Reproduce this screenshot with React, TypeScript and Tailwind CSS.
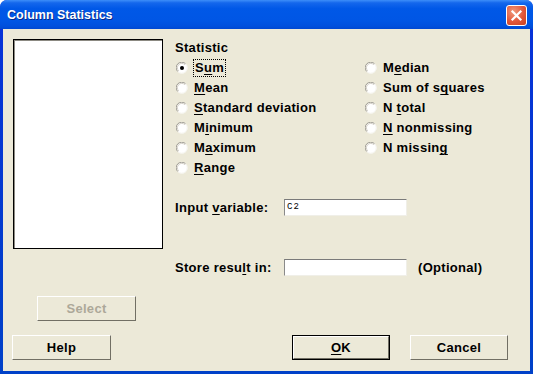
import React from "react";

const font = { fontFamily: '"Liberation Sans", Arial, sans-serif' };

function Radio({ checked }: { checked?: boolean }) {
  return (
    <svg width="12" height="12" viewBox="0 0 12 12" className="shrink-0">
      <circle cx="6" cy="6" r="5.5" fill="#ffffff" />
      <path d="M1.8 9.6 A5.3 5.3 0 0 1 9.6 1.8" fill="none" stroke="#9d9b93" strokeWidth="1" />
      <path d="M2.7 8.9 A4.2 4.2 0 0 1 8.9 2.7" fill="none" stroke="#d4d0c8" strokeWidth="1" />
      <path d="M9.6 1.8 A5.3 5.3 0 0 1 1.8 9.6" fill="none" stroke="#f4f3ee" strokeWidth="1" />
      {checked && <circle cx="6" cy="6" r="2" fill="#000" />}
    </svg>
  );
}

function Label({ text, u }: { text: string; u: number }) {
  return (
    <>
      {text.slice(0, u)}
      <span className="underline underline-offset-[2px] decoration-1">{text[u]}</span>
      {text.slice(u + 1)}
    </>
  );
}

function RadioRow({ text, u, checked }: { text: string; u: number; checked?: boolean }) {
  return (
    <div className="flex h-[20px] items-center">
      <div className="ml-[1px]">
        <Radio checked={checked} />
      </div>
      {checked ? (
        <span className="ml-[5px] px-[1px] h-[18px] leading-[16px] outline outline-1 outline-dotted outline-black -outline-offset-1 border border-transparent">
          <Label text={text} u={u} />
        </span>
      ) : (
        <span className="ml-[6px]">
          <Label text={text} u={u} />
        </span>
      )}
    </div>
  );
}

function Btn({
  children,
  w,
  def,
  disabled,
}: {
  children: React.ReactNode;
  w: string;
  def?: boolean;
  disabled?: boolean;
}) {
  return (
    <div
      className={`${w} h-[25px] ${def ? "border border-black" : ""} bg-[#ece9d8] shrink-0`}
    >
      <div className="h-full w-full border-t border-l border-white border-r border-b border-r-[#716f64] border-b-[#716f64] flex items-center justify-center">
        <span className={disabled ? "text-[#aca899]" : "text-black"}>{children}</span>
      </div>
    </div>
  );
}

function TextBox({ value }: { value?: string }) {
  return (
    <div className="w-[123px] h-[17px] bg-white border-t border-l border-t-[#7a7a7a] border-l-[#8a8a8a] border-r border-b border-r-[#f0efe8] border-b-[#f0efe8] shrink-0 flex items-center">
      <span
        className="ml-[2px] text-[9px] font-normal leading-none tracking-[1px]"
        style={{ fontFamily: '"Liberation Mono", monospace' }}
      >
        {value}
      </span>
    </div>
  );
}

export default function App() {
  return (
    <div
      className="w-[533px] h-[374px] rounded-t-[7px] overflow-hidden flex flex-col bg-[linear-gradient(to_bottom,#0831d9,#0041c8)]"
      style={font}
    >
      {/* Title bar */}
      <div className="h-[29px] shrink-0 flex items-center justify-between pl-[7px] pr-[6px] bg-[linear-gradient(to_bottom,#3d8ef9_0%,#1467ec_10%,#0058e7_30%,#0056e5_70%,#0050dd_90%,#0048d2_100%)]">
        <span className="text-white font-bold text-[12.5px] mt-[1px] [text-shadow:1px_1px_0_#0a2a8a]">
          Column Statistics
        </span>
        <div className="w-[21px] h-[21px] rounded-[3px] border border-white bg-[radial-gradient(circle_at_35%_30%,#f09a7c,#e2563a_55%,#c8401f)] flex items-center justify-center mt-[1px]">
          <svg width="13" height="13" viewBox="0 0 13 13">
            <path d="M2.5 2.5 L10.5 10.5 M10.5 2.5 L2.5 10.5" stroke="#fff" strokeWidth="2.2" strokeLinecap="square" />
          </svg>
        </div>
      </div>

      {/* Client */}
      <div className="flex-1 mx-[3px] mb-[3px] bg-[#ece9d8] flex flex-col text-[13px] font-bold text-black tracking-[0.3px]">
        <div className="flex">
          {/* left column */}
          <div className="flex flex-col ml-[10px] mt-[10px]">
            <div className="w-[150px] h-[210px] border border-black bg-white">
              <div className="w-full h-full border-t border-l border-[#8c8a82]" />
            </div>
            <div className="ml-[24px] mt-[47px]">
              <Btn w="w-[99px]" disabled>
                Select
              </Btn>
            </div>
          </div>

          {/* right panel */}
          <div className="ml-[12px] mt-[11px] flex flex-col">
            <div className="h-[16px] leading-[16px]">Statistic</div>
            <div className="flex mt-[2px]">
              <div className="w-[189px] flex flex-col">
                <RadioRow text="Sum" u={1} checked />
                <RadioRow text="Mean" u={0} />
                <RadioRow text="Standard deviation" u={0} />
                <RadioRow text="Minimum" u={1} />
                <RadioRow text="Maximum" u={1} />
                <RadioRow text="Range" u={0} />
              </div>
              <div className="flex flex-col">
                <RadioRow text="Median" u={1} />
                <RadioRow text="Sum of squares" u={8} />
                <RadioRow text="N total" u={2} />
                <RadioRow text="N nonmissing" u={0} />
                <RadioRow text="N missing" u={8} />
              </div>
            </div>
            <div className="flex items-center mt-[21px] h-[17px]">
              <span className="w-[109px]">
                <Label text="Input variable:" u={6} />
              </span>
              <TextBox value="C2" />
            </div>
            <div className="flex items-center mt-[43px] h-[17px]">
              <span className="w-[109px]">
                <Label text="Store result in:" u={10} />
              </span>
              <TextBox />
              <span className="ml-[11px]">(Optional)</span>
            </div>
          </div>
        </div>

        {/* bottom buttons */}
        <div className="flex mt-[14px] ml-[9px]">
          <Btn w="w-[99px]">Help</Btn>
          <div className="ml-[181px]">
            <Btn w="w-[98px]" def>
              <Label text="OK" u={0} />
            </Btn>
          </div>
          <div className="ml-[20px]">
            <Btn w="w-[98px]">Cancel</Btn>
          </div>
        </div>
      </div>
    </div>
  );
}
